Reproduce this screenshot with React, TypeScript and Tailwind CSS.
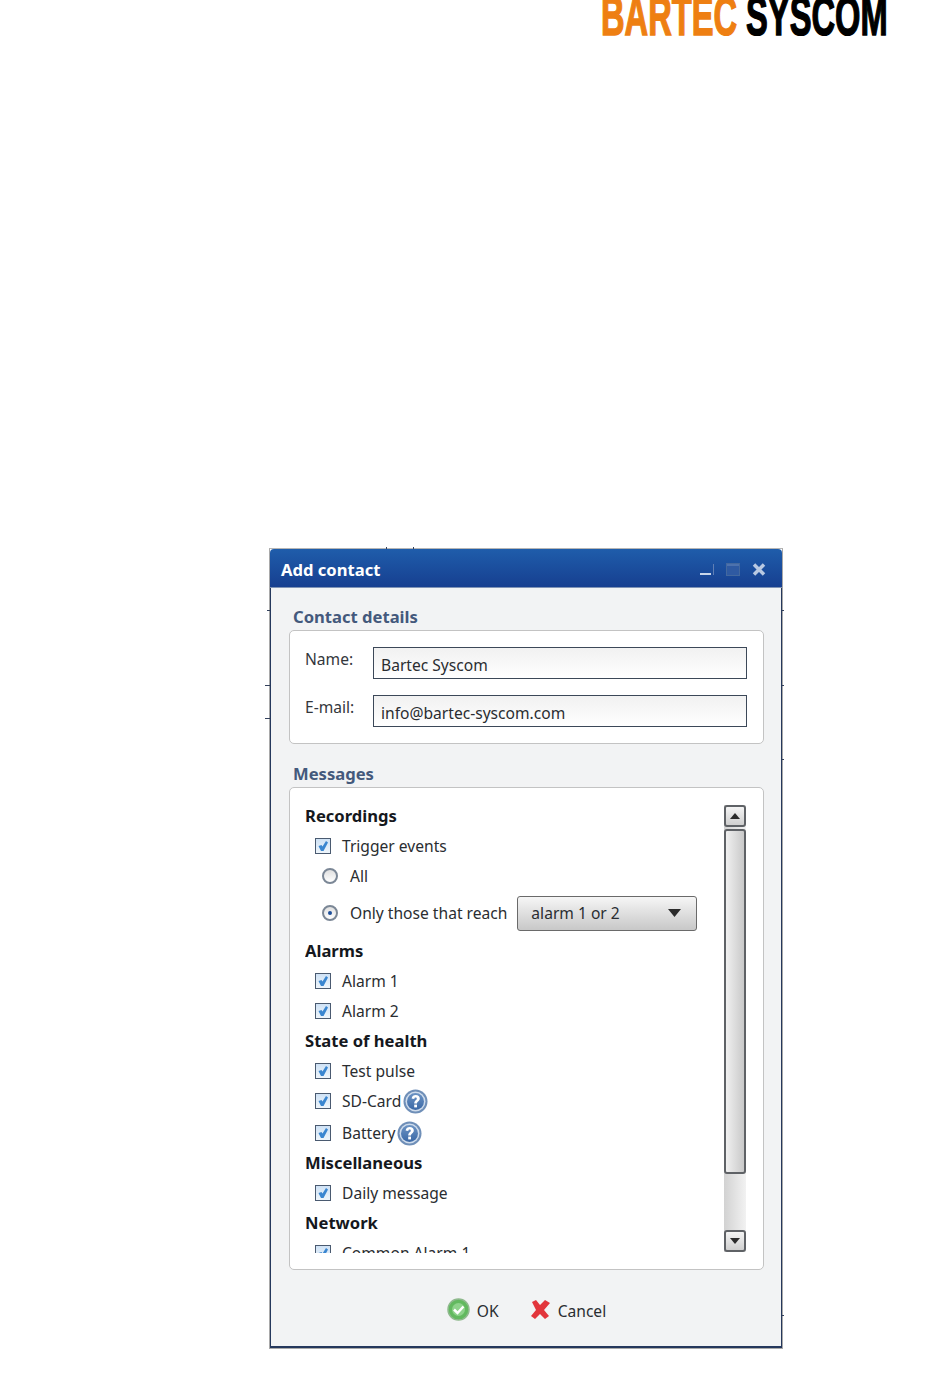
const font = { fontFamily: '"Noto Sans", sans-serif' };

const TICKS = [
  'left-[-3px] top-[61px] h-px w-[3px]',
  'left-[-5px] top-[136px] h-px w-[5px]',
  'left-[-5px] top-[169px] h-px w-[5px]',
  'left-[116px] top-[-2px] h-[2px] w-px',
  'left-[143px] top-[-2px] h-[2px] w-px',
  'right-[-2px] top-[61px] h-px w-[2px]',
  'right-[-2px] top-[136px] h-px w-[2px]',
  'right-[-2px] top-[210px] h-px w-[2px]',
  'right-[-2px] top-[766px] h-px w-[2px]',
];

function Checkbox() {
  return (
    <span className="flex h-[16px] w-[16px] shrink-0 items-center justify-center border border-[#4a5a70] bg-gradient-to-b from-[#cfe2f5] to-[#eef5fb]">
      <svg width="12" height="12" viewBox="0 0 12 12">
        <path d="M1.5 6 L4.5 5 L5.5 6.5 L9 1 L11 2.5 L6.5 11 L4 11 Z" fill="#3a86d0" />
      </svg>
    </span>
  );
}

function Radio({ checked }: { checked?: boolean }) {
  return (
    <span className="flex h-[16px] w-[16px] shrink-0 items-center justify-center rounded-full border-2 border-[#7b8796] bg-gradient-to-b from-[#e0e0e0] to-white">
      {checked && <span className="h-[4px] w-[4px] rounded-full bg-[#1d4f9a]" />}
    </span>
  );
}

function HelpIcon() {
  return (
    <svg width="25" height="25" viewBox="0 0 25 25" className="ml-[2px] shrink-0">
      <defs>
        <linearGradient id="helpFill" x1="0" y1="0" x2="0" y2="1">
          <stop offset="0" stopColor="#6d94c4" />
          <stop offset="1" stopColor="#3a68a6" />
        </linearGradient>
      </defs>
      <circle cx="12.5" cy="12.5" r="12" fill="#6f8fb8" />
      <circle cx="12.5" cy="12.5" r="10" fill="#cfdcec" />
      <circle cx="12.5" cy="12.5" r="8.5" fill="url(#helpFill)" />
      <path d="M8.6 9.6 C8.8 7 10.8 6 12.7 6 C15.2 6 16.8 7.4 16.8 9.5 C16.8 12.2 14 12.2 14 14.6 L11.2 14.6 C11.2 11.2 13.8 11.2 13.8 9.7 C13.8 9 13.4 8.6 12.6 8.6 C11.8 8.6 11.4 9.1 11.3 9.9 Z" fill="#fff" />
      <rect x="11.2" y="15.6" width="2.8" height="2.8" fill="#fff" />
    </svg>
  );
}

function Heading({ children, className = '' }: { children: string; className?: string }) {
  return <div className={`flex h-[30px] items-center text-[16.6px] font-bold text-[#15181d] ${className}`}>{children}</div>;
}

function CheckRow({ label, help, className = '' }: { label: string; help?: boolean; className?: string }) {
  return (
    <div className={`flex h-[30px] items-center pl-[10px] text-[15.6px] text-[#2a2d31] ${className}`}>
      <Checkbox />
      <span className="ml-[11px] pt-[2px]">{label}</span>
      {help && <HelpIcon />}
    </div>
  );
}

function ScrollButton({ up }: { up?: boolean }) {
  return (
    <div className="flex h-[22px] w-[22px] items-center justify-center rounded-[3px] border-2 border-[#5f6266] bg-gradient-to-b from-[#f4f4f4] to-[#cfcfcf]">
      <svg width="10" height="6" viewBox="0 0 10 6">
        <path d={up ? 'M5 0 L10 6 L0 6 Z' : 'M0 0 L10 0 L5 6 Z'} fill="#2b2b2b" />
      </svg>
    </div>
  );
}

function Field({ label, value }: { label: string; value: string }) {
  return (
    <div className="flex h-[32px] items-start">
      <span className="w-[68px] text-[15.6px] leading-[24px] text-[#33373c]">{label}</span>
      <div className="flex h-[32px] w-[374px] items-center border border-[#3c4858] bg-gradient-to-b from-[#f1f1f1] to-white pl-[7px] pt-[5px] text-[15.6px] text-[#2a2d31]">
        {value}
      </div>
    </div>
  );
}

export default function App() {
  return (
    <div className="flex h-[1398px] w-[950px] flex-col bg-white" style={font}>
      <div className="flex h-[36px] justify-end overflow-hidden pr-[62px]">
        <div
          className="mt-[-16px] origin-right scale-x-[0.583] whitespace-nowrap text-[56px] font-bold leading-[64px] text-black [-webkit-text-stroke:1.5px_currentColor]"
          style={{ fontFamily: '"Liberation Sans", sans-serif' }}
        >
          <span className="text-[#ee7f12]">BARTEC</span> SYSCOM
        </div>
      </div>

      <div className="relative ml-[269px] mt-[512px] flex h-[801px] w-[514px] flex-col border border-[#a9a9a9] border-t-[#b5b5b5]">
        {TICKS.map((tick) => (
          <span key={tick} className={`absolute bg-[#33415c] ${tick}`} />
        ))}
        <div className="flex h-[39px] items-center justify-between rounded-t-[4px] border-b border-[#7f93b5] bg-gradient-to-b from-[#1f5dab] to-[#173f90] pl-[11px] pr-[16px]">
          <span className="pt-[4px] text-[16.6px] font-bold text-white">Add contact</span>
          <div className="flex items-center gap-[12px] pt-[2px]">
            <svg width="14" height="14" viewBox="0 0 14 14">
              <rect x="0" y="11" width="11" height="2" fill="#c9d6ea" />
              <rect x="13" y="2" width="1" height="11" fill="#5f7fb5" />
            </svg>
            <svg width="14" height="13" viewBox="0 0 14 13">
              <rect x="0.5" y="0.5" width="13" height="12" fill="#2f5aa2" stroke="#43689f" />
              <rect x="1" y="1" width="12" height="2" fill="#4d72ae" />
            </svg>
            <svg width="14" height="13" viewBox="0 0 14 13">
              <path d="M2 1.5 L12 11.5 M12 1.5 L2 11.5" stroke="#b9c9e2" strokeWidth="3.5" />
            </svg>
          </div>
        </div>

        <div className="flex min-h-0 flex-1 flex-col border-x border-b-2 border-x-[#25385c] border-b-[#25385c] bg-[#f2f3f4] pl-[18px] pr-[17px]">
          <div className="flex h-[42px] items-end pb-[3px] pl-[4px] text-[16.6px] font-bold leading-[20px] text-[#44597c]">Contact details</div>
          <div className="flex h-[114px] flex-col gap-[16px] rounded-[5px] border border-[#c3c3c3] bg-white pl-[15px] pt-[16px]">
            <Field label="Name:" value="Bartec Syscom" />
            <Field label="E-mail:" value="info@bartec-syscom.com" />
          </div>

          <div className="flex h-[43px] items-end pb-[3px] pl-[4px] text-[16.6px] font-bold leading-[20px] text-[#44597c]">Messages</div>
          <div className="flex h-[483px] rounded-[5px] border border-[#c3c3c3] bg-white pl-[15px] pt-[13px]">
            <div className="h-[452px] w-[419px] shrink-0 overflow-hidden">
              <Heading>Recordings</Heading>
              <CheckRow label="Trigger events" />
              <div className="flex h-[30px] items-center pl-[17px] text-[15.6px] text-[#2a2d31]">
                <Radio />
                <span className="ml-[12px] pt-[2px]">All</span>
              </div>
              <div className="flex h-[37px] items-center pl-[17px] pt-[7px] text-[15.6px] text-[#2a2d31]">
                <Radio checked />
                <span className="ml-[12px] pt-[2px]">Only those that reach</span>
                <div className="ml-[10px] flex h-[35px] w-[180px] items-center justify-between rounded-[3px] border border-[#6a6a6a] bg-gradient-to-b from-[#f6f6f6] to-[#c8c8c8] pl-[13px] pr-[15px]">
                  <span className="pt-[2px]">alarm 1 or 2</span>
                  <svg width="13" height="8" viewBox="0 0 13 8">
                    <path d="M0 0 L13 0 L6.5 8 Z" fill="#2b2b2b" />
                  </svg>
                </div>
              </div>
              <Heading className="mt-[8px]">Alarms</Heading>
              <CheckRow label="Alarm 1" />
              <CheckRow label="Alarm 2" />
              <Heading>State of health</Heading>
              <CheckRow label="Test pulse" />
              <CheckRow label="SD-Card" help />
              <CheckRow label="Battery" help className="mt-[2px]" />
              <Heading>Miscellaneous</Heading>
              <CheckRow label="Daily message" />
              <Heading>Network</Heading>
              <CheckRow label="Common Alarm 1" />
            </div>

            <div className="mt-[4px] flex h-[447px] w-[22px] shrink-0 flex-col bg-gradient-to-r from-[#d2d2d2] to-[#f2f2f2]">
              <ScrollButton up />
              <div className="mt-[2px] h-[345px] rounded-[3px] border-2 border-[#5f6266] bg-gradient-to-r from-[#f0f0f0] to-[#c9c9c9]" />
              <div className="flex-1" />
              <ScrollButton />
            </div>
          </div>

          <div className="flex flex-1 items-center justify-center gap-[30px] pt-[4px] text-[15.6px] text-[#2a2d31]">
            <div className="flex items-center gap-[7px]">
              <svg width="23" height="23" viewBox="0 0 23 23">
                <circle cx="11.5" cy="11.5" r="10.5" fill="#62b95f" stroke="#8fb98d" strokeWidth="1.5" />
                <circle cx="11.5" cy="11.5" r="6.5" fill="#8ed28b" />
                <path d="M7 11.5 L10.5 15 L16.5 8.5" fill="none" stroke="#fff" strokeWidth="2.5" />
              </svg>
              <span className="mt-[3px]">OK</span>
            </div>
            <div className="flex items-center gap-[7px]">
              <svg width="22" height="22" viewBox="0 0 22 22">
                <path d="M3 3 L7 1 L11 6 L16 1 L21 4 L15 11 L20 17 L16 20 L11 15 L6 20 L2 17 L7 11 Z" fill="#e2363c" />
              </svg>
              <span className="mt-[3px]">Cancel</span>
            </div>
          </div>
        </div>
      </div>
    </div>
  );
}
